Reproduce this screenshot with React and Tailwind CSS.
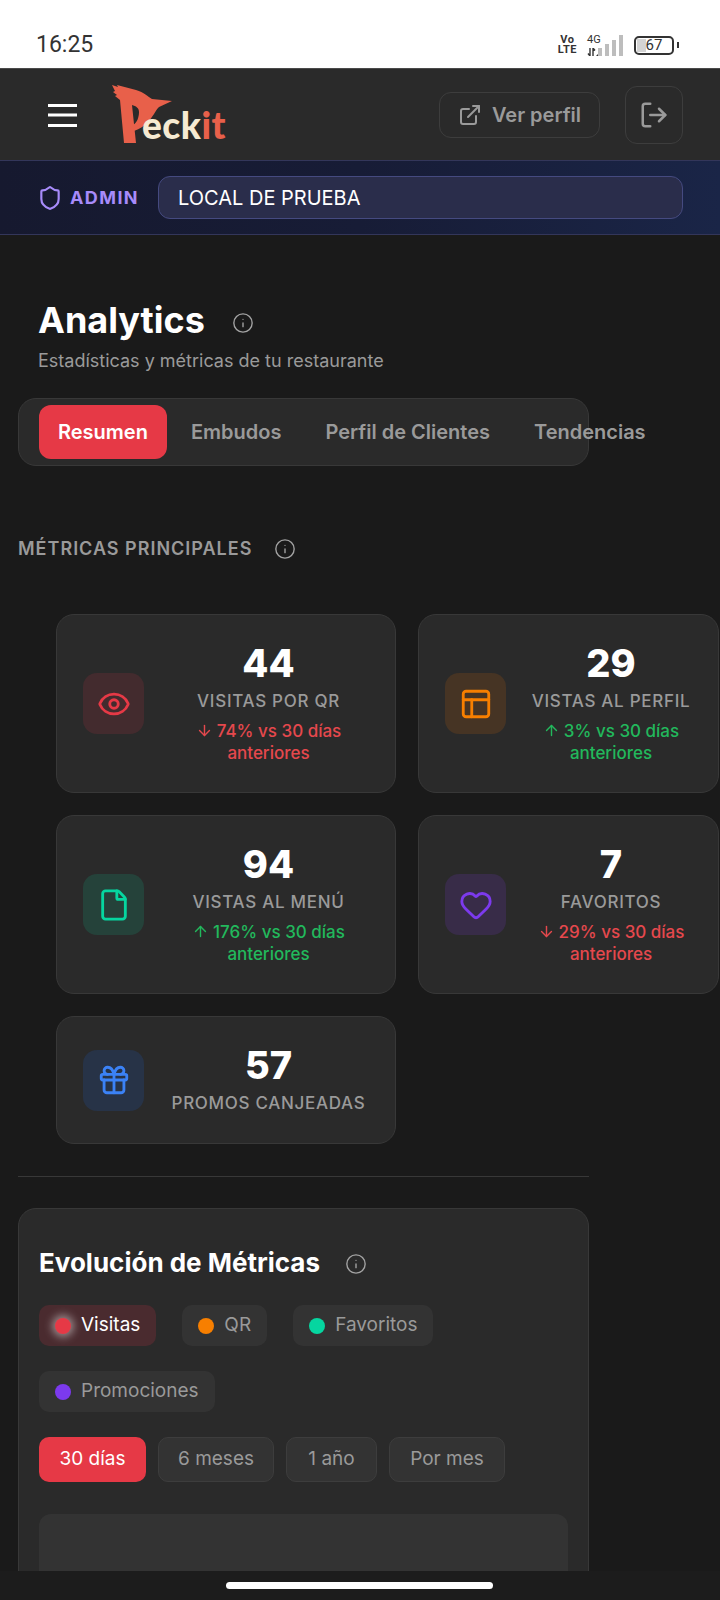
import {
  ArrowDown,
  ArrowUp,
  ExternalLink,
  Eye,
  File,
  Gift,
  Heart,
  Info,
  LogOut,
  PanelsTopLeft,
  Shield,
} from "lucide-react";

const metrics = [
  { value: "44", label: "VISITAS POR QR", delta: "74%", down: true, icon: Eye, box: "bg-[#432b2e]", color: "text-[#e63946]" },
  { value: "29", label: "VISTAS AL PERFIL", delta: "3%", down: false, icon: PanelsTopLeft, box: "bg-[#463424]", color: "text-[#f77f00]" },
  { value: "94", label: "VISTAS AL MENÚ", delta: "176%", down: false, icon: File, box: "bg-[#25423a]", color: "text-[#06d6a0]" },
  { value: "7", label: "FAVORITOS", delta: "29%", down: true, icon: Heart, box: "bg-[#382c48]", color: "text-[#7c3aed]" },
  { value: "57", label: "PROMOS CANJEADAS", icon: Gift, box: "bg-[#273347]", color: "text-[#3b82f6]" },
];

const series = [
  { name: "QR", dot: "bg-[#f77f00]" },
  { name: "Favoritos", dot: "bg-[#06d6a0]" },
];

function Logo() {
  return (
    <div className="relative w-[125px] h-[60px] shrink-0">
      {/* bird shaped P */}
      <svg width="62" height="60" viewBox="0 0 62 60" className="absolute left-0 top-0">
        <path
          fill="#e8604a"
          d="M0 0 L6 2 L5 0 L24 5 C32 7 36 12 40 14 L60 16 L47 22 C43 26 41 32 36 37 C32 41 28 44 22 46 L21 40 C25 38 27 32 27 27 C27 23 24 21 20 20 L24 58 L12 58 L8 15 L3 11 L5 10 L1 7 L3 6 Z"
        />
      </svg>
      <span className="absolute left-[30px] top-[20px] font-[Lato] text-[37px] leading-[40px] font-black tracking-[0.5px] text-[#f6ead2]">
        eck<span className="text-[#e8604a]">it</span>
      </span>
    </div>
  );
}

function StatusIcons() {
  return (
    <div className="flex items-center pr-[41px] font-[Roboto] text-[#333333]">
      <div className="flex flex-col text-[11px] leading-[10px] font-bold tracking-[0.5px] items-center">
        <span>Vo</span>
        <span>LTE</span>
      </div>
      <div className="ml-[10px] flex flex-col w-[12px]">
        <span className="text-[11px] leading-[11px]">4G</span>
        <svg width="12" height="8" viewBox="0 0 12 8" className="mt-[3px]">
          <path d="M3 0v8M3 8 1 5.5M6 8V0M6 0l2 2.5" stroke="#333" strokeWidth="1.4" fill="none" />
          <path d="M9 8l3-3v3z" fill="#333" />
        </svg>
      </div>
      <svg width="26" height="21" viewBox="0 0 26 21" className="ml-[-1px]">
        <rect x="0" y="13" width="4" height="8" fill="#bdbdbd" />
        <rect x="7" y="9" width="4" height="12" fill="#bdbdbd" />
        <rect x="14" y="5" width="4" height="16" fill="#bdbdbd" />
        <rect x="21" y="0" width="4" height="21" fill="#bdbdbd" />
      </svg>
      <div className="ml-[10px] relative w-[40px] h-[19px] border-2 border-[#333333] rounded-[5px] flex items-center justify-center text-[15px] overflow-hidden">
        <div className="absolute left-[1px] top-[1px] bottom-[1px] w-[9px] bg-[#d4d4d4]" />
        <span className="relative">67</span>
      </div>
      <div className="ml-[3px] w-[2px] h-[6px] bg-[#333333]" />
    </div>
  );
}

function MetricCard({ metric }) {
  const Icon = metric.icon;
  const Arrow = metric.down ? ArrowDown : ArrowUp;
  return (
    <div className="flex items-center gap-[24px] px-[26px] py-[28px] bg-[#2a2a2a] border border-[#383838] rounded-[18px]">
      <div className={`w-[61px] h-[61px] shrink-0 rounded-[14px] flex items-center justify-center ${metric.box}`}>
        <Icon size={34} strokeWidth={2} className={metric.color} />
      </div>
      <div className="flex-1 flex flex-col items-center text-center">
        <span className="text-[38px] leading-[40px] font-extrabold text-white">{metric.value}</span>
        <span className="mt-[6px] text-[17px] leading-[24px] font-medium tracking-[0.7px] text-[#9a9a9a] whitespace-nowrap">
          {metric.label}
        </span>
        {metric.delta && (
          <span className={`mt-[7px] text-[17px] leading-[22px] font-medium ${metric.down ? "text-[#e5484d]" : "text-[#22b85c]"}`}>
            <Arrow size={17} strokeWidth={2} className="inline-block align-[-2px] mr-[4px]" />
            {metric.delta} vs 30 días anteriores
          </span>
        )}
      </div>
    </div>
  );
}

export default function App() {
  return (
    <div className="w-[720px] h-[1600px] overflow-hidden flex flex-col bg-[#1a1a1a] font-[Inter,sans-serif]">
      {/* status bar */}
      <div className="h-[68px] shrink-0 pt-[22px] pl-[36px] flex items-center justify-between bg-white">
        <span className="font-[Roboto] text-[23px] text-[#333333]">16:25</span>
        <StatusIcons />
      </div>

      {/* header */}
      <header className="h-[92px] shrink-0 pl-[48px] pr-[37px] flex items-center bg-[#2a2a2a] border-t border-[#4a4a4a]">
        <svg width="29" height="24" viewBox="0 0 29 24" className="shrink-0">
          <path d="M0 2.5h29M0 12h29M0 22.5h29" stroke="#ffffff" strokeWidth="3" />
        </svg>
        <div className="ml-[35px]">
          <Logo />
        </div>
        <button className="ml-auto w-[161px] h-[46px] flex items-center justify-center gap-[10px] border border-[#3d3d3d] rounded-[12px] text-[20px] font-semibold text-[#9a9a9a]">
          <ExternalLink size={24} strokeWidth={2} />
          Ver perfil
        </button>
        <button className="ml-[25px] w-[58px] h-[58px] flex items-center justify-center border border-[#3d3d3d] rounded-[12px] text-[#9a9a9a]">
          <LogOut size={30} strokeWidth={2} />
        </button>
      </header>

      {/* admin bar */}
      <div className="h-[75px] shrink-0 pl-[37px] pr-[37px] flex items-center bg-gradient-to-r from-[#16192f] via-[#171c36] to-[#1a2547] border-y border-[#33365a]">
        <Shield size={26} strokeWidth={2} className="text-[#a78bfa]" />
        <span className="ml-[7px] text-[18px] font-bold tracking-[1.4px] text-[#a78bfa]">ADMIN</span>
        <div className="ml-[19px] flex-1 h-[43px] pl-[19px] flex items-center bg-[#2a2d4b] border border-[#454a80] rounded-[12px] text-[20px] text-white">
          LOCAL DE PRUEBA
        </div>
      </div>

      {/* main */}
      <main className="flex-1 min-h-0 overflow-hidden pt-[65px]">
        <div className="pl-[38px] flex items-center">
          <h1 className="text-[36px] leading-[40px] font-bold text-white">Analytics</h1>
          <Info size={22} strokeWidth={1.5} className="ml-[27px] mt-[6px] text-[#a3a3a3]" />
        </div>
        <p className="pl-[38px] mt-[7px] text-[18px] leading-[28px] text-[#9a9a9a]">Estadísticas y métricas de tu restaurante</p>

        <div className="ml-[18px] mt-[23px] w-[571px] h-[68px] pl-[20px] flex items-center gap-[4px] bg-[#2a2a2a] border border-[#383838] rounded-[18px] whitespace-nowrap text-[20px] font-semibold text-[#9a9a9a]">
          <button className="h-[54px] px-[19px] rounded-[12px] bg-[#e63946] text-white font-semibold">Resumen</button>
          <button className="px-[20px]">Embudos</button>
          <button className="px-[20px]">Perfil de Clientes</button>
          <button className="px-[20px]">Tendencias</button>
        </div>

        <div className="ml-[18px] mt-[69px] flex items-center">
          <h2 className="text-[18px] leading-[28px] font-semibold tracking-[1px] text-[#9a9a9a]">MÉTRICAS PRINCIPALES</h2>
          <Info size={22} strokeWidth={1.5} className="ml-[22px] text-[#a3a3a3]" />
        </div>

        <div className="ml-[56px] mt-[51px] grid grid-cols-[340px_301px] gap-x-[22px] gap-y-[22px]">
          {metrics.map((metric) => (
            <MetricCard key={metric.label} metric={metric} />
          ))}
        </div>

        <div className="ml-[18px] mt-[32px] w-[571px] h-px bg-[#383838]" />

        {/* evolution */}
        <section className="ml-[18px] mt-[31px] w-[571px] h-[420px] px-[20px] pt-[38px] bg-[#2a2a2a] border border-[#383838] rounded-[18px]">
          <div className="flex items-center">
            <h2 className="text-[26px] leading-[32px] font-bold text-white">Evolución de Métricas</h2>
            <Info size={22} strokeWidth={1.5} className="ml-[25px] mt-[2px] text-[#a3a3a3]" />
          </div>

          <div className="mt-[26px] flex flex-wrap gap-x-[26px] gap-y-[25px] w-[500px] text-[19px]">
            <div className="h-[41px] px-[16px] flex items-center gap-[10px] rounded-[10px] bg-[#4a2b2f] text-white">
              <span className="w-[16px] h-[16px] rounded-full bg-[#e63946] shadow-[0_0_8px_3px_rgba(255,255,255,0.45)]" />
              Visitas
            </div>
            {series.map((item) => (
              <div key={item.name} className="h-[41px] px-[16px] flex items-center gap-[10px] rounded-[10px] bg-[#333333] text-[#9a9a9a]">
                <span className={`w-[16px] h-[16px] rounded-full ${item.dot}`} />
                {item.name}
              </div>
            ))}
            <div className="h-[41px] px-[16px] flex items-center gap-[10px] rounded-[10px] bg-[#333333] text-[#9a9a9a]">
              <span className="w-[16px] h-[16px] rounded-full bg-[#7c3aed]" />
              Promociones
            </div>
          </div>

          <div className="mt-[25px] flex gap-[12px] text-[19px] text-[#9a9a9a]">
            <button className="h-[45px] w-[107px] rounded-[10px] bg-[#e63946] text-white">30 días</button>
            <button className="h-[45px] w-[116px] rounded-[10px] bg-[#333333] border border-[#3d3d3d]">6 meses</button>
            <button className="h-[45px] w-[91px] rounded-[10px] bg-[#333333] border border-[#3d3d3d]">1 año</button>
            <button className="h-[45px] w-[116px] rounded-[10px] bg-[#333333] border border-[#3d3d3d]">Por mes</button>
          </div>

          <div className="mt-[32px] h-[300px] rounded-[12px] bg-[#333333]" />
        </section>
      </main>

      {/* nav bar */}
      <div className="h-[29px] shrink-0 pt-[11px] flex justify-center bg-[#1c1c1c]">
        <div className="ml-[-1px] w-[267px] h-[7px] rounded-full bg-white" />
      </div>
    </div>
  );
}
